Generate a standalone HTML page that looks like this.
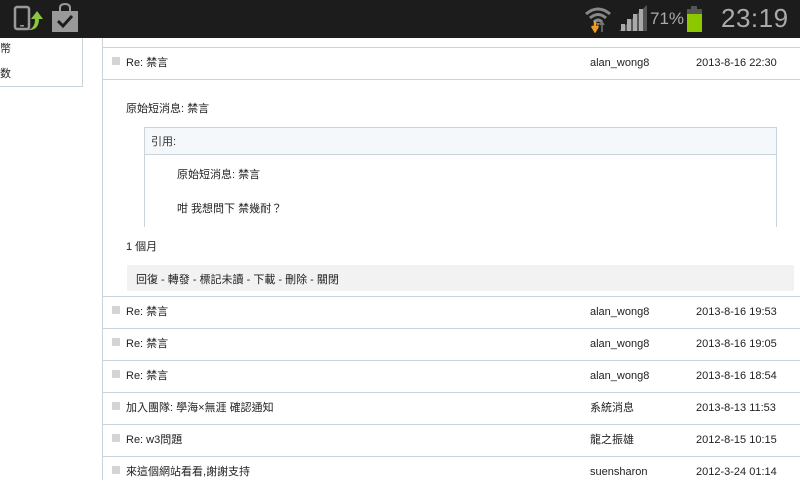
<!DOCTYPE html>
<html><head><meta charset="utf-8">
<style>
*{margin:0;padding:0;box-sizing:border-box}
body{width:800px;height:480px;overflow:hidden;background:#fff;font-family:"Liberation Sans","Noto Sans CJK TC",sans-serif;font-size:11px;line-height:13px;color:#222;position:relative}
.sb{position:absolute;left:0;top:0;width:800px;height:38px;background:#1c1c1c}
.abs{position:absolute}
.side{position:absolute;left:-1px;top:38px;width:84px;height:49px;border:1px solid #c9d3da;border-top:none;background:#fff}
.side div{position:absolute;left:0;font-size:11px}
.main{position:absolute;left:102px;top:38px;width:700px;height:442px;border-left:1px solid #c9d3da}
.row{position:absolute;left:0;width:698px;height:32px;border-top:1px solid #c9d3da}
.row .cb{position:absolute;left:9px;top:9px;width:8px;height:8px;background:#d4d4d4}
.row .t{position:absolute;left:23px;top:9px}
.row .u{position:absolute;left:487px;top:9px}
.row .d{position:absolute;left:593px;top:9px}
</style></head><body>
<div class="sb">
 <svg class="abs" style="left:13px;top:5px" width="30" height="28" viewBox="0 0 30 28">
  <rect x="2" y="2" width="14" height="22" rx="2" fill="none" stroke="#999" stroke-width="2.5"/>
  <rect x="7" y="20" width="4" height="1.5" fill="#999"/>
  <path d="M14 25 Q22 24 22 14 L18 14 L24 6 L30 14 L26 14 Q26 26 14 25Z" fill="#8cc63f"/>
 </svg>
 <svg class="abs" style="left:51px;top:3px" width="28" height="30" viewBox="0 0 28 30">
  <path d="M9 8 V5 Q9 1 14 1 Q19 1 19 5 V8" fill="none" stroke="#999" stroke-width="2"/>
  <rect x="1" y="8" width="26" height="21" fill="#999"/>
  <path d="M7 18 L12 23 L21 13" fill="none" stroke="#1c1c1c" stroke-width="3"/>
 </svg>
 <svg class="abs" style="left:584px;top:5px" width="28" height="28" viewBox="0 0 28 28">
  <path d="M2 9 Q14 -1 26 9" fill="none" stroke="#888" stroke-width="3"/>
  <path d="M6 13 Q14 6 22 13" fill="none" stroke="#888" stroke-width="3"/>
  <path d="M10 17 Q14 13 18 17" fill="none" stroke="#888" stroke-width="3"/>
  <path d="M12 18 L14 21 L16 18Z" fill="#888"/>
  <path d="M11 16 V23 M8 21 L11 26 L14 21" fill="none" stroke="#f0a020" stroke-width="2.5"/>
  <path d="M18 27 V18 M16 20 L18 17 L20 20" fill="none" stroke="#777" stroke-width="1.5"/>
 </svg>
 <svg class="abs" style="left:619px;top:5px" width="28" height="26" viewBox="0 0 28 26">
  <path d="M0 26 L28 0 L28 26Z" fill="#555"/>
  <rect x="2" y="19" width="4" height="7" fill="#aaa"/><rect x="8" y="14" width="4" height="12" fill="#aaa"/>
  <rect x="14" y="9" width="4" height="17" fill="#aaa"/><rect x="20" y="4" width="4" height="22" fill="#aaa"/>
 </svg>
 <div class="abs" style="left:650px;top:10px;color:#aaa;font-size:17px;line-height:18px">71%</div>
 <div class="abs" style="left:691px;top:6px;width:6px;height:3px;background:#555"></div>
 <div class="abs" style="left:687px;top:9px;width:15px;height:23px;background:#555"></div>
 <div class="abs" style="left:687px;top:14px;width:15px;height:18px;background:#8cc800"></div>
 <div class="abs" style="left:721px;top:4px;color:#aaa;font-size:26px;line-height:28px;letter-spacing:0.5px">23:19</div>
</div>
<div class="side"><div style="top:5px">幣</div><div style="top:30px">数</div></div>
<div class="main">
 <div class="row" style="top:9px"><div class="cb"></div><div class="t">Re: 禁言</div><div class="u">alan_wong8</div><div class="d">2013-8-16 22:30</div></div>
 <div class="abs" style="left:0;top:41px;width:698px;border-top:1px solid #c9d3da"></div>
 <div class="abs" style="left:23px;top:65px">原始短消息: 禁言</div>
 <div class="abs" style="left:41px;top:89px;width:633px;height:100px;border:1px solid #c9d3da;border-bottom:none">
  <div style="height:27px;background:#f4f8fb;border-bottom:1px solid #c9d3da;padding:8px 0 0 6px;color:#333">引用:</div>
  <div class="abs" style="left:32px;top:41px">原始短消息: 禁言</div>
  <div class="abs" style="left:32px;top:75px">咁 我想問下 禁幾耐？</div>
 </div>
 <div class="abs" style="left:23px;top:203px">1 個月</div>
 <div class="abs" style="left:24px;top:227px;width:667px;height:26px;background:#f2f2f2;padding:9px 0 0 9px">回復 - 轉發 - 標記未讀 - 下載 - 刪除 - 關閉</div>
 <div class="row" style="top:258px"><div class="cb"></div><div class="t">Re: 禁言</div><div class="u">alan_wong8</div><div class="d">2013-8-16 19:53</div></div>
 <div class="row" style="top:290px"><div class="cb"></div><div class="t">Re: 禁言</div><div class="u">alan_wong8</div><div class="d">2013-8-16 19:05</div></div>
 <div class="row" style="top:322px"><div class="cb"></div><div class="t">Re: 禁言</div><div class="u">alan_wong8</div><div class="d">2013-8-16 18:54</div></div>
 <div class="row" style="top:354px"><div class="cb"></div><div class="t">加入團隊: 學海×無涯 確認通知</div><div class="u">系統消息</div><div class="d">2013-8-13 11:53</div></div>
 <div class="row" style="top:386px"><div class="cb"></div><div class="t">Re: w3問題</div><div class="u">龍之振雄</div><div class="d">2012-8-15 10:15</div></div>
 <div class="row" style="top:418px"><div class="cb"></div><div class="t">來這個網站看看,謝謝支持</div><div class="u">suensharon</div><div class="d">2012-3-24 01:14</div></div>
</div>
</body></html>
